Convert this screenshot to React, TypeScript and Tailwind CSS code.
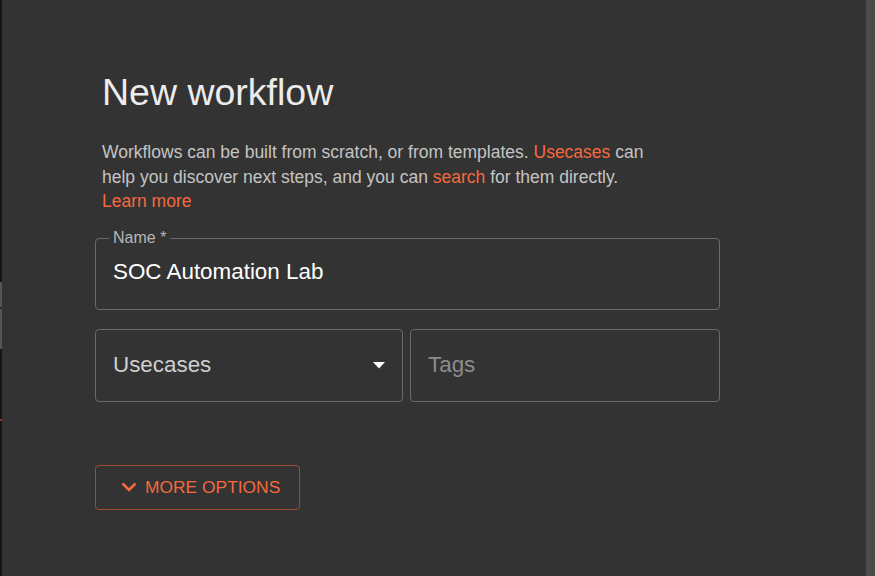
export default function App() {
  return (
    <div className="flex h-[576px] w-[875px] overflow-hidden bg-[#333333] font-['Liberation_Sans',Arial,sans-serif]">
      {/* background page peeking on the left */}
      <div className="flex w-[2px] flex-col bg-[#151515]">
        <div className="h-[282px]" />
        <div className="h-[25px] bg-[#555555]" />
        <div className="h-[2px] bg-[#1e3050]" />
        <div className="h-[40px] bg-[#555555]" />
        <div className="h-[70px]" />
        <div className="h-[2px] bg-[#8a3a22]" />
      </div>

      <div className="flex-1 pl-[93px] pt-[70px]">
        <h1 className="pl-[7px] text-[37.5px] leading-[44px] text-[#ececec]">New workflow</h1>

        <p className="mt-[26px] w-[562px] pl-[7px] text-[17.5px] leading-[24.5px] text-[#c4c4c4]">
          Workflows can be built from scratch, or from templates.{" "}
          <span className="text-[#f5693d]">Usecases</span> can help you discover next steps, and you can{" "}
          <span className="text-[#f5693d]">search</span> for them directly.
          <br />
          <span className="text-[#f5693d]">Learn more</span>
        </p>

        <div className="mt-[24px] w-[625px]">
          <div className="relative h-[72px] rounded-[4px] border border-[#6a6a6a] pl-[17px] pt-[20px]">
            <span className="absolute -top-[9px] left-[13px] bg-[#333333] px-[4px] text-[16px] leading-[16px] text-[#b8b8b8]">
              Name *
            </span>
            <div className="text-[22.4px] leading-[26px] text-white">SOC Automation Lab</div>
          </div>

          <div className="mt-[19px] flex gap-[7px]">
            <div className="flex h-[73px] w-[308px] items-center justify-between rounded-[4px] border border-[#6a6a6a] pl-[17px] pr-[17px]">
              <span className="text-[22.4px] text-[#cfcfcf]">Usecases</span>
              <svg width="12" height="7" viewBox="0 0 12 7">
                <path d="M0 0h12L6 6.5z" fill="#ffffff" />
              </svg>
            </div>
            <div className="flex h-[73px] flex-1 items-center rounded-[4px] border border-[#6a6a6a] pl-[17px]">
              <span className="text-[22.4px] text-[#8c8c8c]">Tags</span>
            </div>
          </div>

          <button className="mt-[63px] flex h-[45px] w-[205px] items-center gap-[8px] rounded-[4px] border border-[#a04a33] pl-[25px] text-[17.4px] text-[#f5693d]">
            <svg width="16" height="10" viewBox="0 0 16 10" fill="none">
              <polyline points="1.5,1.5 8,8 14.5,1.5" stroke="#f5693d" strokeWidth="2.6" />
            </svg>
            MORE OPTIONS
          </button>
        </div>
      </div>

      <div className="w-[9px] bg-[#4b4b4b]" />
    </div>
  );
}
